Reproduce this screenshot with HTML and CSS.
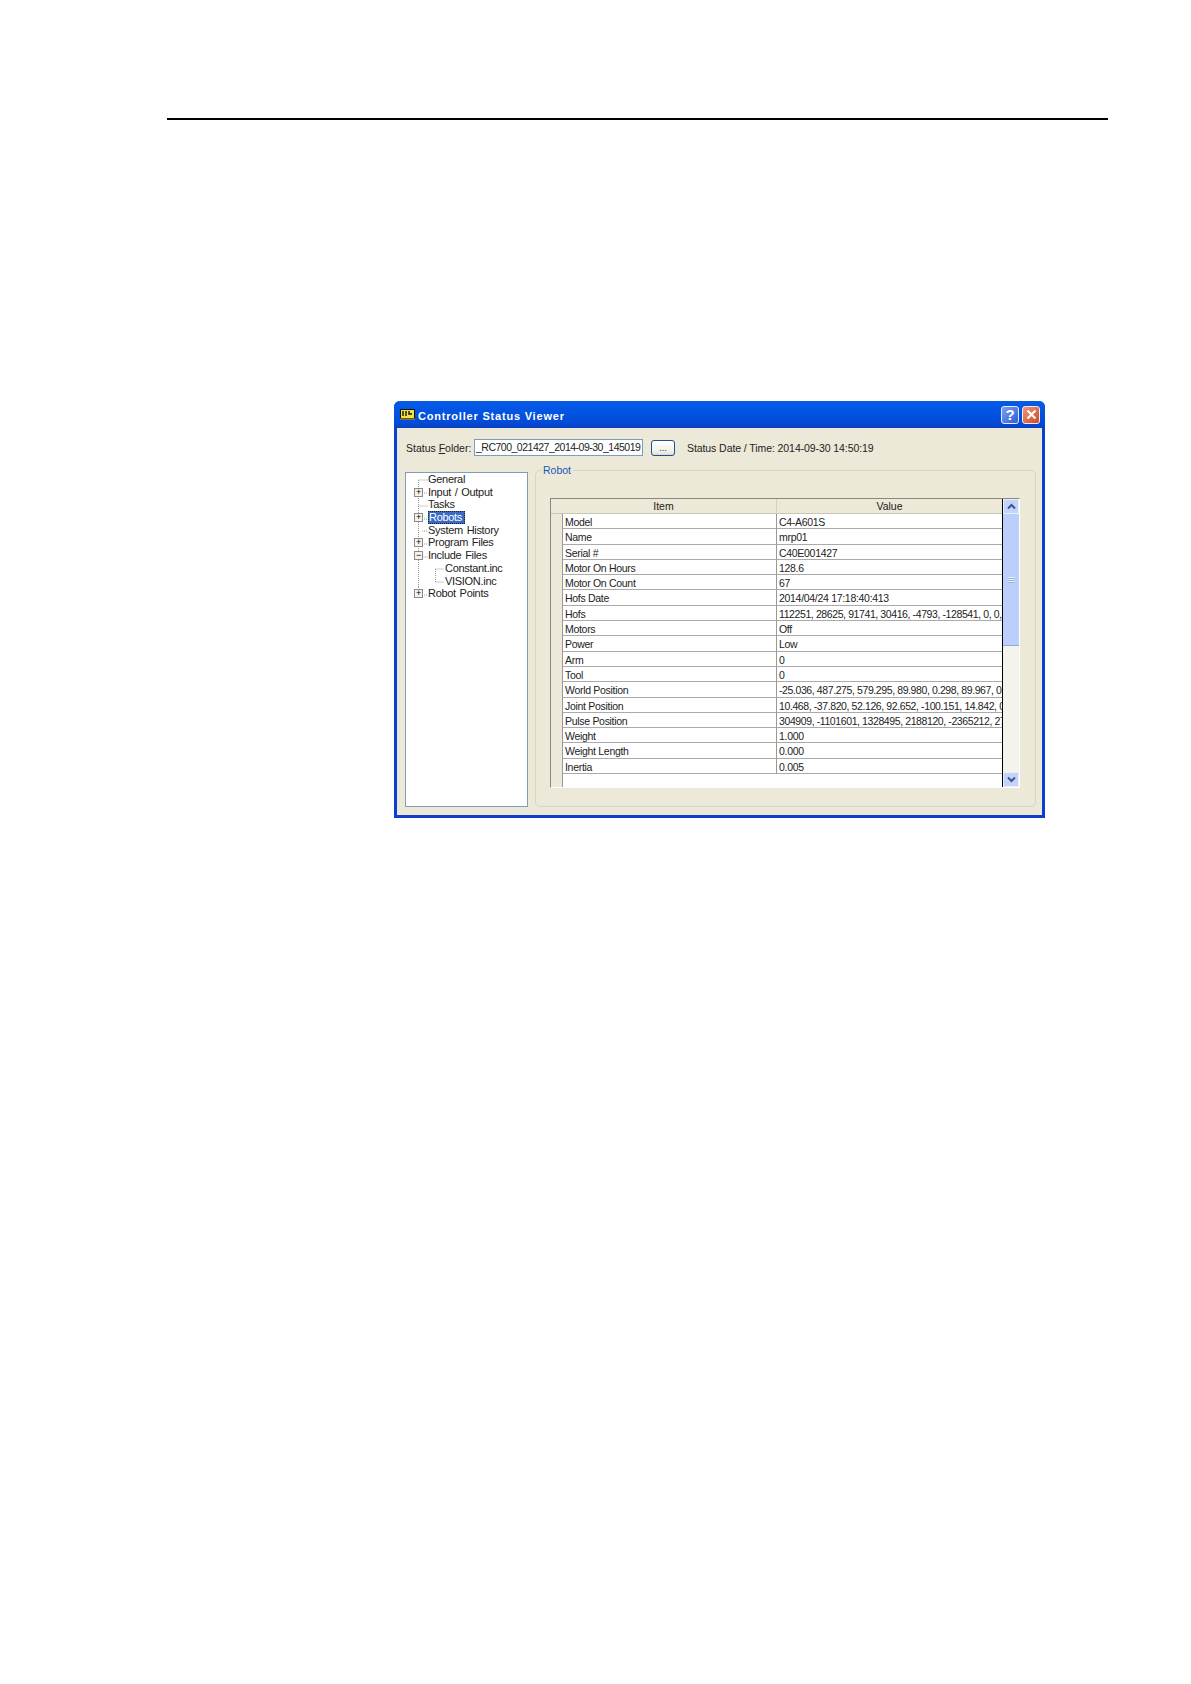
FILE: index.html
```html
<!DOCTYPE html>
<html lang="en">
<head>
  <meta charset="UTF-8" />
  <title>Controller Status Viewer</title>
  <link rel="stylesheet" href="styles.css">
</head>
<body>
  <div class="page-rule"></div>

  <div class="window">
    <div class="titlebar">
      <svg class="app-icon" width="15" height="11" viewBox="0 0 15 11">
        <rect x="0.5" y="0.5" width="14" height="9" fill="#f5e23a" stroke="#111" />
        <path d="M3 2v5M6 2v5M9 2v3h3" stroke="#111" stroke-width="1.4" fill="none" />
        <path d="M0 10h15" stroke="#c9a400" />
      </svg>
      <span class="title-text">Controller Status Viewer</span>
      <div class="help-btn">?</div>
      <div class="close-btn">
        <svg width="13" height="13" viewBox="0 0 13 13">
          <path d="M2.5 2.5l8 8M10.5 2.5l-8 8" stroke="#fff" stroke-width="2.2" />
        </svg>
      </div>
    </div>

    <div class="content">
      <div class="folder-row">
        <span class="folder-label">Status <u>F</u>older:</span>
        <div class="folder-input">_RC700_021427_2014-09-30_145019</div>
        <div class="browse-btn">...</div>
        <span class="status-date">Status Date / Time: 2014-09-30 14:50:19</span>
      </div>

      <div class="main-row">
        <div class="tree">
          <svg class="tree-lines" width="60" height="150" viewBox="0 0 60 150">
            <path d="M12.5 7V114M12.5 7H22M12.5 33H22M12.5 84H22M29.5 96V109M29.5 96H38M29.5 109H38" stroke="#999" stroke-dasharray="1 1" fill="none" />
            <path d="M16 20H22M16 46H22M16 58H22M16 71H22M16 122H22M12.5 114V118" stroke="#999" stroke-dasharray="1 1" fill="none" />
          </svg>
          <div class="tree-item">General</div>
          <div class="tree-item"><span class="expander">+</span>Input / Output</div>
          <div class="tree-item">Tasks</div>
          <div class="tree-item"><span class="expander">+</span><span class="selected">Robots</span></div>
          <div class="tree-item">System History</div>
          <div class="tree-item"><span class="expander">+</span>Program Files</div>
          <div class="tree-item"><span class="expander">&minus;</span>Include Files</div>
          <div class="tree-item child">Constant.inc</div>
          <div class="tree-item child">VISION.inc</div>
          <div class="tree-item"><span class="expander">+</span>Robot Points</div>
        </div>

        <div class="group">
          <div class="legend">Robot</div>
          <div class="grid-wrap">
            <div class="grid">
              <div class="grid-head">
                <div class="head-cell item-col">Item</div>
                <div class="head-cell value-col">Value</div>
              </div>
              <div class="grid-row"><div class="row-head"></div><div class="cell item-col">Model</div><div class="cell value-col">C4-A601S</div></div>
              <div class="grid-row"><div class="row-head"></div><div class="cell item-col">Name</div><div class="cell value-col">mrp01</div></div>
              <div class="grid-row"><div class="row-head"></div><div class="cell item-col">Serial #</div><div class="cell value-col">C40E001427</div></div>
              <div class="grid-row"><div class="row-head"></div><div class="cell item-col">Motor On Hours</div><div class="cell value-col">128.6</div></div>
              <div class="grid-row"><div class="row-head"></div><div class="cell item-col">Motor On Count</div><div class="cell value-col">67</div></div>
              <div class="grid-row"><div class="row-head"></div><div class="cell item-col">Hofs Date</div><div class="cell value-col">2014/04/24 17:18:40:413</div></div>
              <div class="grid-row"><div class="row-head"></div><div class="cell item-col">Hofs</div><div class="cell value-col tight">112251, 28625, 91741, 30416, -4793, -128541, 0, 0,</div></div>
              <div class="grid-row"><div class="row-head"></div><div class="cell item-col">Motors</div><div class="cell value-col">Off</div></div>
              <div class="grid-row"><div class="row-head"></div><div class="cell item-col">Power</div><div class="cell value-col">Low</div></div>
              <div class="grid-row"><div class="row-head"></div><div class="cell item-col">Arm</div><div class="cell value-col">0</div></div>
              <div class="grid-row"><div class="row-head"></div><div class="cell item-col">Tool</div><div class="cell value-col">0</div></div>
              <div class="grid-row"><div class="row-head"></div><div class="cell item-col">World Position</div><div class="cell value-col tight">-25.036, 487.275, 579.295, 89.980, 0.298, 89.967, 0</div></div>
              <div class="grid-row"><div class="row-head"></div><div class="cell item-col">Joint Position</div><div class="cell value-col tight">10.468, -37.820, 52.126, 92.652, -100.151, 14.842, 0</div></div>
              <div class="grid-row"><div class="row-head"></div><div class="cell item-col">Pulse Position</div><div class="cell value-col tight">304909, -1101601, 1328495, 2188120, -2365212, 27</div></div>
              <div class="grid-row"><div class="row-head"></div><div class="cell item-col">Weight</div><div class="cell value-col">1.000</div></div>
              <div class="grid-row"><div class="row-head"></div><div class="cell item-col">Weight Length</div><div class="cell value-col">0.000</div></div>
              <div class="grid-row"><div class="row-head"></div><div class="cell item-col">Inertia</div><div class="cell value-col">0.005</div></div>
              <div class="grid-empty"><div class="row-head"></div></div>
            </div>
            <div class="scrollbar">
              <div class="scroll-btn">
                <svg width="9" height="7" viewBox="0 0 9 7"><path d="M1 5.5l3.5-3.5 3.5 3.5" stroke="#3a5590" stroke-width="2" fill="none" /></svg>
              </div>
              <div class="scroll-thumb"><div class="grip"></div></div>
              <div class="scroll-track"></div>
              <div class="scroll-btn">
                <svg width="9" height="7" viewBox="0 0 9 7"><path d="M1 1.5l3.5 3.5 3.5-3.5" stroke="#3a5590" stroke-width="2" fill="none" /></svg>
              </div>
            </div>
          </div>
        </div>
      </div>
    </div>
  </div>
</body>
</html>
```

FILE: styles.css
```css
body {
  margin: 0;
  background: #fff;
  font-family: "Liberation Sans", Arial, sans-serif;
  font-size: 10.5px;
  color: #222;
}
.page-rule {
  width: 941px;
  height: 2px;
  margin: 118px 0 0 167px;
  background: #000;
}
.window {
  width: 651px;
  height: 417px;
  margin: 281px 0 0 394px;
  box-sizing: border-box;
  border: 3px solid #0a3fd0;
  border-top: 0;
  border-radius: 6px 6px 0 0;
  background: #ece9d8;
}
.titlebar {
  height: 27px;
  margin: 0 -3px;
  padding: 0 5px 0 6px;
  display: flex;
  align-items: center;
  border-radius: 6px 6px 0 0;
  background: linear-gradient(#0a5be0 0, #0458e8 12%, #0252e0 50%, #0449d4 85%, #0a3fc0 100%);
}
.app-icon {
  flex: none;
  margin-right: 3px;
}
.title-text {
  flex: 1;
  padding-top: 2px;
  color: #fff;
  font-size: 11px;
  font-weight: bold;
  letter-spacing: 0.8px;
}
.help-btn,
.close-btn {
  width: 18px;
  height: 18px;
  box-sizing: border-box;
  border: 1px solid #e4ecfa;
  border-radius: 3px;
  display: flex;
  align-items: center;
  justify-content: center;
}
.help-btn {
  margin-right: 3px;
  background: linear-gradient(135deg, #7ba0ee, #2f5fd8);
  color: #fff;
  font-size: 15px;
  font-weight: bold;
}
.close-btn {
  background: linear-gradient(135deg, #ec9a7c, #d3451f);
}
.content {
  padding: 11px 5px 0 8px;
}
.folder-row {
  height: 17px;
  display: flex;
  align-items: center;
}
.folder-label {
  width: 69px;
  flex: none;
  padding-left: 1px;
  box-sizing: border-box;
  white-space: nowrap;
}
.folder-input {
  width: 169px;
  height: 17px;
  flex: none;
  box-sizing: border-box;
  border: 1px solid #7f9db9;
  background: #fff;
  padding-left: 1px;
  line-height: 15px;
  letter-spacing: -0.5px;
  white-space: nowrap;
}
.browse-btn {
  width: 24px;
  height: 16px;
  flex: none;
  box-sizing: border-box;
  margin-left: 8px;
  border: 1px solid #1f4f8f;
  border-radius: 3px;
  background: linear-gradient(#fff, #f0efe6 80%, #dcd8c8);
  text-align: center;
  line-height: 14px;
  font-size: 9px;
}
.status-date {
  margin-left: 12px;
  letter-spacing: -0.08px;
  white-space: nowrap;
}
.main-row {
  display: flex;
  margin-top: 14px;
}
.tree {
  position: relative;
  width: 123px;
  height: 335px;
  flex: none;
  box-sizing: border-box;
  margin-top: 2px;
  border: 1px solid #7f9db9;
  background: #fff;
  font-size: 11px;
  letter-spacing: -0.3px;
  word-spacing: 1px;
}
.tree-lines {
  position: absolute;
  left: 0;
  top: 0;
}
.tree-item {
  position: relative;
  height: 12.7px;
  line-height: 12.7px;
  padding-left: 22px;
  white-space: nowrap;
}
.tree-item.child {
  padding-left: 39px;
}
.expander {
  position: absolute;
  left: 8px;
  top: 2px;
  width: 9px;
  height: 9px;
  box-sizing: border-box;
  border: 1px solid #8a8a8a;
  background: #f4f2ea;
  color: #000;
  font-size: 9px;
  line-height: 7px;
  text-align: center;
}
.selected {
  display: inline-block;
  padding: 0 3px 0 1px;
  background: #3a6bc4;
  outline: 1px dotted #222;
  outline-offset: -1px;
  color: #fff;
}
.group {
  position: relative;
  width: 501px;
  height: 337px;
  flex: none;
  box-sizing: border-box;
  margin-left: 7px;
  padding: 27px 0 0 14px;
  border: 1px solid #d8d5c4;
  border-radius: 5px;
}
.legend {
  position: absolute;
  left: 6px;
  top: -7px;
  padding: 0 2px 0 1px;
  background: #ece9d8;
  color: #1c55b4;
}
.grid-wrap {
  display: flex;
  width: 470px;
  height: 290px;
  border-top: 1px solid #8a8878;
  border-left: 1px solid #8a8878;
  border-bottom: 1px solid #fff;
  border-right: 1px solid #fff;
  box-sizing: border-box;
}
.grid {
  width: 452px;
  flex: none;
  display: flex;
  flex-direction: column;
  background: #fff;
  border-right: 1px solid #000;
  box-sizing: border-box;
  overflow: hidden;
}
.grid-head {
  height: 15px;
  flex: none;
  display: flex;
  box-sizing: border-box;
  background: #ece9d8;
  border-bottom: 1px solid #c9c6b5;
  text-align: center;
  line-height: 14px;
}
.head-cell {
  box-sizing: border-box;
}
.item-col {
  width: 214px;
  flex: none;
}
.value-col {
  flex: 1;
  min-width: 0;
}
.grid-head .item-col {
  width: 226px;
  border-right: 1px solid #d4d1c0;
}
.grid-row {
  height: 15.3px;
  flex: none;
  display: flex;
  box-sizing: border-box;
}
.row-head {
  width: 12px;
  flex: none;
  box-sizing: border-box;
  background: #ece9d8;
  border-right: 1px solid #999;
}
.cell {
  box-sizing: border-box;
  padding-left: 2px;
  border-bottom: 1px solid #aaa;
  line-height: 16px;
  letter-spacing: -0.3px;
  overflow: hidden;
  white-space: nowrap;
}
.cell.tight {
  letter-spacing: -0.4px;
}
.cell.item-col {
  border-right: 1px solid #999;
}
.grid-empty {
  flex: 1;
  display: flex;
}
.scrollbar {
  flex: 1;
  display: flex;
  flex-direction: column;
  background: #f4f3ec;
}
.scroll-btn {
  height: 15px;
  flex: none;
  display: flex;
  align-items: center;
  justify-content: center;
  background: #c3d3fa;
  border: 1px solid #e8eefc;
  box-sizing: border-box;
}
.scroll-thumb {
  height: 132px;
  flex: none;
  display: flex;
  align-items: center;
  justify-content: center;
  background: #bccffa;
  border-bottom: 1px solid #8ea8e0;
  box-sizing: border-box;
}
.grip {
  width: 7px;
  height: 6px;
  background: repeating-linear-gradient(#e4ecfd 0 1px, #9db4e8 1px 2px);
}
.scroll-track {
  flex: 1;
}
```
